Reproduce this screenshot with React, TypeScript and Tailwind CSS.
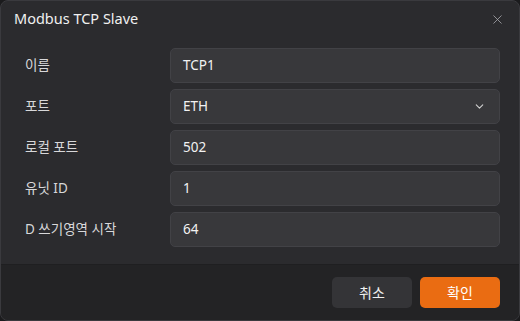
import { X, ChevronDown } from "lucide-react";

const FONT = { fontFamily: '"Noto Sans", "Noto Sans CJK KR", sans-serif' };

const FIELDS = [
  { label: "이름", value: "TCP1" },
  { label: "포트", value: "ETH", select: true },
  { label: "로컬 포트", value: "502" },
  { label: "유닛 ID", value: "1" },
  { label: "D 쓰기영역 시작", value: "64" },
];

export default function App() {
  return (
    <div className="h-[321px] w-[520px] bg-[#1b1b1d]" style={FONT}>
      <div className="flex h-full w-full flex-col overflow-hidden rounded-[8px] border border-[#3a3a3e] bg-[#2b2b2e]">
        <div className="flex h-[36px] items-center justify-between pl-[13px] pr-[14px]">
          <span className="text-[14.5px] text-[#f0f0f0]">Modbus TCP Slave</span>
          <X className="h-[15px] w-[15px] text-[#a8a8ac]" strokeWidth={1.3} />
        </div>
        <div className="flex flex-1 flex-col gap-[6px] pl-[24px] pr-[19px] pt-[11px]">
          {FIELDS.map((f) => (
            <div key={f.label} className="flex items-center">
              <span className="w-[145px] text-[13.5px] text-[#d8d8da]">{f.label}</span>
              <div className="flex h-[35px] flex-1 items-center justify-between rounded-[5px] border border-[#424246] bg-[#38383b] pl-[12px] pr-[13px]">
                <span className="text-[13.5px] text-[#f2f2f2]">{f.value}</span>
                {f.select && <ChevronDown className="h-[13px] w-[13px] text-[#d0d0d0]" strokeWidth={2} />}
              </div>
            </div>
          ))}
        </div>
        <div className="flex h-[56px] items-center justify-end gap-[8px] border-t border-[#1f1f21] bg-[#232325] pr-[19px]">
          <button className="h-[31px] w-[80px] rounded-[5px] bg-[#343437] text-[14px] text-[#f0f0f0]">
            취소
          </button>
          <button className="h-[31px] w-[80px] rounded-[5px] bg-[#ea6c12] text-[14px] text-white">
            확인
          </button>
        </div>
      </div>
    </div>
  );
}
